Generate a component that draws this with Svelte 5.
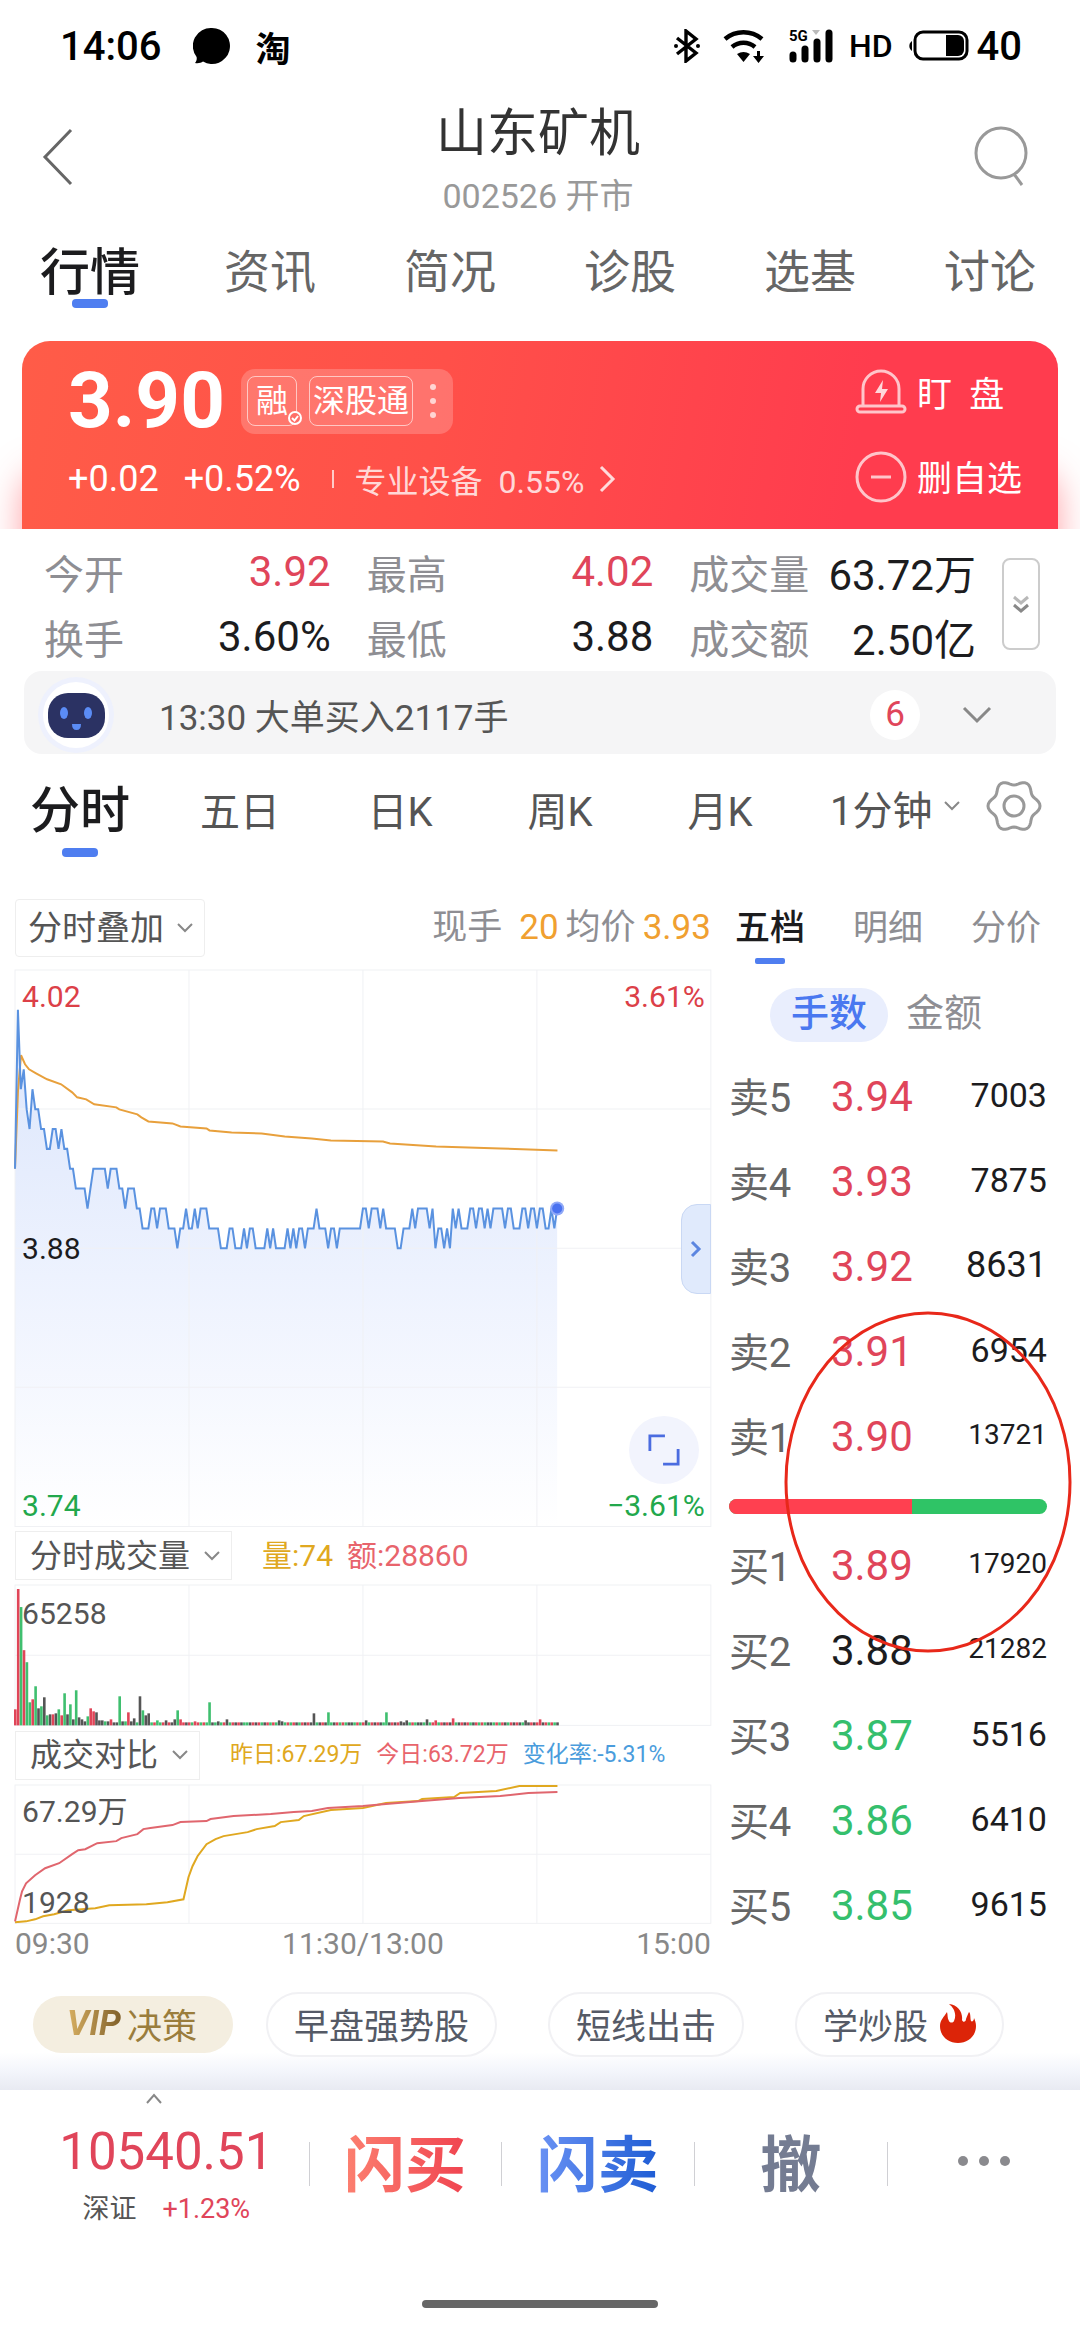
<script lang="ts">
  interface Level {
    name: string;
    price: string;
    volume: string;
    tone: string;
    size: string;
  }

  const tabs = ['行情', '资讯', '简况', '诊股', '选基', '讨论'];
  const periods = ['分时', '五日', '日K', '周K', '月K'];
  const bookTabs = ['五档', '明细', '分价'];

  let activeTab = 0;
  let activePeriod = 0;
  let activeBook = 0;
  let unit = '手数';

  const quote = [
    { label: '今开', value: '3.92', tone: 'up' },
    { label: '最高', value: '4.02', tone: 'up' },
    { label: '成交量', value: '63.72万', tone: '' },
    { label: '换手', value: '3.60%', tone: '' },
    { label: '最低', value: '3.88', tone: '' },
    { label: '成交额', value: '2.50亿', tone: '' }
  ];

  const asks: Level[] = [
    { name: '卖5', price: '3.94', volume: '7003', tone: 'up', size: 'mid' },
    { name: '卖4', price: '3.93', volume: '7875', tone: 'up', size: 'mid' },
    { name: '卖3', price: '3.92', volume: '8631', tone: 'up', size: 'big' },
    { name: '卖2', price: '3.91', volume: '6954', tone: 'up', size: 'mid' },
    { name: '卖1', price: '3.90', volume: '13721', tone: 'up', size: 'small' }
  ];

  const bids: Level[] = [
    { name: '买1', price: '3.89', volume: '17920', tone: 'up', size: 'small' },
    { name: '买2', price: '3.88', volume: '21282', tone: '', size: 'small' },
    { name: '买3', price: '3.87', volume: '5516', tone: 'down', size: 'mid' },
    { name: '买4', price: '3.86', volume: '6410', tone: 'down', size: 'mid' },
    { name: '买5', price: '3.85', volume: '9615', tone: 'down', size: 'mid' }
  ];

  const buyShare = 57.5;

  // Chart geometry: 240 trading minutes across, 28 price ticks down
  const W = 694;
  const H = 555;
  const step = W / 240;
  const tick = H / 28;
  const cols = [W / 4, W / 2, (W * 3) / 4];

  // One hex digit per minute: ticks above the 3.88 close
  const minutes =
    '4c897687766' + '5566565544' + '3333234444' + '4344433233' + '3221112212' +
    '2211101121' + '1212221111' + '0001100010' + '1100001010' + '0001010110' +
    '1112111011' + '0111111112' + '2122212111' + '1001112122' + '2212011010' +
    '2121112212' + '2121222212' + '2111221221' + '2211212';

  const points = [...minutes].map((c, i) => {
    const y = H / 2 - parseInt(c, 16) * tick;
    return `${(i * step).toFixed(1)},${y.toFixed(1)}`;
  });
  const priceLine = points.join(' ');
  const lastX = (minutes.length - 1) * step;
  const lastY = H / 2 - 2 * tick;
  const priceArea = `0,${H} ${priceLine} ${lastX.toFixed(1)},${H}`;

  const avgLine =
    '0,198 3,120 6,85 10,94 14,99 21,103 32,109 46,114 57,122 62,127 71,129 79,134 101,137 104,139 122,144 126,147 133,151 157,153 165,156 191,158 194,160 216,162 246,163 269,166 296,168 315,170 367,171 374,173 420,176 484,178 541,180';
  const todayLine =
    '0,136 5,114 7,106 11,98 20,90 30,83 44,78 57,69 63,65 70,64 82,58 101,56 106,53 122,49 128,44 135,43 157,40 165,37 191,36 195,34 218,31 255,29 278,27 296,26 312,23 347,21 370,19 406,16 443,13 484,11 512,8 541,7';
  const yesterdayLine =
    '0,137 11,136 20,134 28,131 39,129 53,125 80,123 94,120 131,119 152,117 168,114 173,92 177,81 182,71 191,59 200,54 208,51 232,47 241,44 259,41 265,37 283,35 288,31 315,25 347,23 370,18 402,16 406,14 438,12 444,8 480,6 503,1 541,1';

  // minute, height, colour (r up, g down, k flat)
  const spikes =
    '0 16 r,1 136 r,2 118 g,3 75 r,4 63 g,5 23 g,6 26 r,7 39 g,8 17 k,9 19 g,10 28 k,11 10 g,12 11 k,13 11 r,14 12 k,15 16 g,16 10 r,17 32 g,18 11 k,19 21 g,20 6 k,21 35 g,22 8 k,23 6 k,24 4 k,25 9 g,26 17 r,27 14 r,28 13 k,29 5 k,30 5 k,31 4 g,32 4 k,33 6 r,34 3 k,36 29 g,37 4 k,38 4 g,39 13 r,40 4 k,41 7 k,43 29 k,44 15 g,45 10 k,46 12 k,49 5 g,52 5 k,55 6 k,56 15 g,57 6 r,62 4 r,67 23 g,70 4 k,73 6 k,91 5 k,92 4 k,103 12 k,108 13 g,121 5 k,128 13 g,133 4 k,135 5 k,142 6 k,145 5 r,151 7 r,176 5 k,181 6 r';
  const fills = { r: '#e04558', g: '#3fbf6f', k: '#555' };
  const volumes = [...minutes].map((_, i) => ({ h: 3, c: 'rkgrgk'[(i * 7 + (i >> 2)) % 6] }));
  spikes.split(',').forEach((s) => {
    const [m, h, c] = s.split(' ');
    volumes[+m] = { h: +h, c };
  });

  // Six-lobed settings icon
  const gear = Array.from({ length: 72 }, (_, i) => {
    const a = (i * Math.PI) / 36;
    const r = 23.5 + 2.5 * Math.cos(6 * a);
    return `${(28 + r * Math.cos(a)).toFixed(1)},${(28 + r * Math.sin(a)).toFixed(1)}`;
  }).join(' ');
</script>

{#snippet caret()}
  <svg class="caret" viewBox="0 0 18 12" aria-hidden="true"><path d="M2 2l7 7 7-7" /></svg>
{/snippet}

{#snippet grid(h: number)}
  <g class="grid">
    <rect x="0" y="0" width={W} height={h} />
    {#each cols as x}
      <line x1={x} x2={x} y1="0" y2={h} />
    {/each}
    <line x1="0" x2={W} y1={h / 2} y2={h / 2} />
  </g>
{/snippet}

{#snippet book(rows: Level[], caption: string)}
  <table class="book" aria-label={caption}>
    <tbody>
      {#each rows as row}
        <tr>
          <th scope="row">{row.name}</th>
          <td class="price {row.tone}">{row.price}</td>
          <td class="volume {row.size}">{row.volume}</td>
        </tr>
      {/each}
    </tbody>
  </table>
{/snippet}

<div class="page">
  <!-- Status bar -->
  <div class="status">
    <span class="clock">14:06</span>
    <svg class="bubble" viewBox="0 0 38 38" aria-hidden="true">
      <path d="M19 1a18 18 0 1 1-9 33.600c-2 1.400-5 2-8 1.400 1.600-2 2-4 1.600-6A18 18 0 0 1 19 1z" />
    </svg>
    <span class="tao">淘</span>
    <div class="signals">
      <svg class="bt" viewBox="0 0 28 34" aria-hidden="true">
        <path d="M4 9l19 15-10 8V2l10 8L4 25" fill="none" stroke="#000" stroke-width="3.400" />
        <circle cx="3" cy="17" r="2" /><circle cx="25" cy="17" r="2" />
      </svg>
      <svg class="wifi" viewBox="0 0 42 34" aria-hidden="true">
        <path d="M2 10a29 29 0 0 1 37 0M9 18a18 18 0 0 1 23 0" fill="none" stroke="#000" stroke-width="4.500" />
        <path d="M14 25q6.500-4 13 0l-6.500 8zM34 22h3v5h4l-5.500 7-5.500-7h4z" />
      </svg>
      <svg class="cell" viewBox="0 0 44 36" aria-hidden="true">
        <text x="0" y="13" font-size="15" font-weight="700">5G</text>
        <path d="M23 2h8l-4 5z" fill="#bbb" />
        <path d="M4 27v4M16 21v10M28 14v17M40 5v26" stroke="#000" stroke-width="7" stroke-linecap="round" />
      </svg>
      <span class="hd">HD</span>
      <svg class="battery" viewBox="0 0 60 32" aria-hidden="true">
        <path d="M3 11a6 6 0 0 0 0 10z" />
        <rect x="6" y="2" width="52" height="27" rx="8" fill="none" stroke="#000" stroke-width="3" />
        <path d="M37 5h12a6 6 0 0 1 6 6v9a6 6 0 0 1-6 6H37z" />
      </svg>
      <span class="level">40</span>
    </div>
  </div>

  <!-- Title -->
  <header class="header">
    <button class="icon-btn" aria-label="返回">
      <svg class="back" viewBox="0 0 32 58"><path d="M29 2L3 29l26 27" /></svg>
    </button>
    <div class="title">
      <h1>山东矿机</h1>
      <p>002526 开市</p>
    </div>
    <button class="icon-btn" aria-label="搜索">
      <svg class="search" viewBox="0 0 54 62"><circle cx="27" cy="27" r="25" /><path d="M40 48l8 11" /></svg>
    </button>
  </header>

  <nav class="tabs">
    {#each tabs as tab, i}
      <button class:active={activeTab === i} on:click={() => (activeTab = i)}>{tab}</button>
    {/each}
  </nav>

  <!-- Price card -->
  <section class="hero">
    <div class="card">
      <div class="card-main">
        <div class="price-row">
          <strong>3.90</strong>
          <div class="marks">
            <span class="mark short">融
              <svg viewBox="0 0 14 14" aria-hidden="true"><circle cx="7" cy="7" r="6" /><path d="M4 7l2.500 2.500L10 5" /></svg>
            </span>
            <span class="mark">深股通</span>
            <svg class="dots" viewBox="0 0 8 36" aria-hidden="true">
              <circle cx="4" cy="4" r="3" /><circle cx="4" cy="18" r="3" /><circle cx="4" cy="32" r="3" />
            </svg>
          </div>
        </div>
        <div class="change">
          <span>+0.02</span>
          <span>+0.52%</span>
          <i></i>
          <a href="#sector">专业设备&nbsp; 0.55%
            <svg viewBox="0 0 18 28" aria-hidden="true"><path d="M3 2l12 12L3 26" /></svg>
          </a>
        </div>
      </div>
      <div class="card-actions">
        <button>
          <svg viewBox="0 0 52 52" aria-hidden="true">
            <path d="M8 38V22a18 18 0 0 1 36 0v16M5 39h42a3 3 0 0 1 0 6H5a3 3 0 0 1 0-6z" />
            <path class="solid" d="M28 13l-8 13h6l-1 9 8-13h-6z" />
          </svg>
          <span>盯&nbsp; 盘</span>
        </button>
        <button>
          <svg viewBox="0 0 52 52" aria-hidden="true"><circle cx="26" cy="26" r="24" /><path d="M16 26h20" /></svg>
          <span>删自选</span>
        </button>
      </div>
    </div>
  </section>

  <section class="quote">
    <dl>
      {#each quote as item}
        <div>
          <dt>{item.label}</dt>
          <dd class={item.tone}>{item.value}</dd>
        </div>
      {/each}
    </dl>
    <button class="expand" aria-label="展开">
      <svg viewBox="0 0 20 20"><path d="M3 3l7 6 7-6" opacity="0.600" /><path d="M3 11l7 6 7-6" /></svg>
    </button>
  </section>

  <button class="notice">
    <svg class="robot" viewBox="0 0 78 78" aria-hidden="true">
      <circle cx="39" cy="39" r="38" fill="#eef1fd" />
      <circle cx="39" cy="39" r="33" fill="#fff" />
      <rect x="11" y="17" width="57" height="45" rx="20" fill="#2b3263" />
      <ellipse cx="27" cy="37" rx="4" ry="6" fill="#5b8cf5" />
      <ellipse cx="51" cy="37" rx="4" ry="6" fill="#5b8cf5" />
      <path d="M35 48h9q0 6-4.500 6t-4.500-6z" fill="#5b8cf5" />
    </svg>
    <span class="notice-text">13:30 大单买入2117手</span>
    <span class="badge">6</span>
    <svg class="chevron" viewBox="0 0 30 18" aria-hidden="true"><path d="M2 2l13 13L28 2" /></svg>
  </button>

  <nav class="periods">
    {#each periods as period, i}
      <button class:active={activePeriod === i} on:click={() => (activePeriod = i)}>{period}</button>
    {/each}
    <div class="period-more">
      <label>
        <select aria-label="分钟周期"><option>1分钟</option></select>
        {@render caret()}
      </label>
      <button class="gear" aria-label="设置">
        <svg viewBox="0 0 56 56"><polygon points={gear} /><circle cx="28" cy="28" r="10" /></svg>
      </button>
    </div>
  </nav>

  <main class="board">
    <section class="charts">
      <div class="chart-head">
        <label class="picker large">
          <select aria-label="叠加"><option>分时叠加</option></select>
          {@render caret()}
        </label>
        <p class="live">
          <span>现手</span><b>20</b><span>均价</span><b>3.93</b>
        </p>
      </div>

      <div class="plot">
        <svg viewBox="0 0 {W} {H}" role="img" aria-label="分时走势">
          <defs>
            <linearGradient id="fade" gradientUnits="userSpaceOnUse" x1="0" y1="100" x2="0" y2={H}>
              <stop offset="0" stop-color="#dfe8fc" />
              <stop offset="0.450" stop-color="#edf2fe" />
              <stop offset="1" stop-color="#ffffff" />
            </linearGradient>
          </defs>
          <polygon points={priceArea} fill="url(#fade)" />
          {@render grid(H)}
          <g class="grid">
            <line x1="0" x2={W} y1={H / 4} y2={H / 4} />
            <line x1="0" x2={W} y1={(H * 3) / 4} y2={(H * 3) / 4} />
          </g>
          <polyline class="avg" points={avgLine} />
          <polyline class="now" points={priceLine} />
          <circle cx={lastX} cy={lastY} r="7" fill="#8fa8f7" />
          <circle cx={lastX} cy={lastY} r="5" fill="#4a72f0" />
          <text class="red" x="7" y="37">4.02</text>
          <text class="red" x="688" y="37" text-anchor="end">3.61%</text>
          <text class="ink" x="7" y="288">3.88</text>
          <text class="green" x="7" y="545">3.74</text>
          <text class="green" x="688" y="545" text-anchor="end">−3.61%</text>
        </svg>
        <button class="handle" aria-label="收起盘口">
          <svg viewBox="0 0 12 20"><path d="M2 3l7 7-7 7" /></svg>
        </button>
        <button class="full" aria-label="全屏">
          <svg viewBox="0 0 34 34"><path d="M2 18V2h16M32 16v16H16" /></svg>
        </button>
      </div>

      <div class="chart-head sub">
        <label class="picker">
          <select aria-label="副图一"><option>分时成交量</option></select>
          {@render caret()}
        </label>
        <p class="legend"><span class="gold">量:74</span><span class="rose">额:28860</span></p>
      </div>
      <div class="plot">
        <svg viewBox="0 0 {W} 140" role="img" aria-label="分时成交量">
          {@render grid(140)}
          {#each volumes as v, i}
            <rect x={i * step - 1} y={140 - v.h} width="2.600" height={v.h} fill={fills[v.c]} />
          {/each}
          <text class="soft" x="7" y="39">65258</text>
        </svg>
      </div>

      <div class="chart-head sub">
        <label class="picker">
          <select aria-label="副图二"><option>成交对比</option></select>
          {@render caret()}
        </label>
        <p class="legend compare">
          <span class="gold">昨日:67.29万</span><span class="rose">今日:63.72万</span><span class="sky">变化率:-5.31%</span>
        </p>
      </div>
      <div class="plot">
        <svg viewBox="0 0 {W} 138" role="img" aria-label="成交对比">
          {@render grid(138)}
          <polyline class="yesterday" points={yesterdayLine} />
          <polyline class="today" points={todayLine} />
          <text class="soft" x="7" y="37">67.29万</text>
          <text class="soft" x="7" y="128">1928</text>
        </svg>
      </div>
      <div class="axis"><span>09:30</span><span>11:30/13:00</span><span>15:00</span></div>
    </section>

    <section class="depth">
      <nav class="book-tabs">
        {#each bookTabs as tab, i}
          <button class:active={activeBook === i} on:click={() => (activeBook = i)}>{tab}</button>
        {/each}
      </nav>
      <div class="units">
        {#each ['手数', '金额'] as name}
          <button class:active={unit === name} on:click={() => (unit = name)}>{name}</button>
        {/each}
      </div>
      {@render book(asks, '卖盘')}
      <div class="ratio"><span style="width: {buyShare}%"></span></div>
      {@render book(bids, '买盘')}
      <svg class="circle-mark" viewBox="0 0 288 342" aria-hidden="true">
        <ellipse cx="144" cy="171" rx="142" ry="169" />
      </svg>
    </section>
  </main>

  <div class="shortcuts">
    <button class="vip"><em>VIP</em>决策</button>
    <button>早盘强势股</button>
    <button>短线出击</button>
    <button>学炒股
      <svg viewBox="0 0 36 40" aria-hidden="true">
        <path d="M9 0c9 1 14 8 13 16 1 3 4 2 4-1 1-3 2-5 3-7 2 2 1 6 2 9 1 1 3 0 3-3 1 2 2 5 2 8 0 10-8 17-18 17S0 32 0 22c0-6 4-9 7-14 1 3 0 6 2 9 1 2 4 2 5 0C17 10 14 4 9 0z" />
      </svg>
    </button>
  </div>

  <footer class="trade">
    <button class="index">
      <svg viewBox="0 0 18 12" aria-hidden="true"><path d="M2 10l7-8 7 8" /></svg>
      <span class="index-value">10540.51</span>
      <span class="index-row"><span>深证</span><span class="up">+1.23%</span></span>
    </button>
    <button class="buy"><span>闪买</span></button>
    <button class="sell"><span>闪卖</span></button>
    <button class="cancel"><span>撤</span></button>
    <button class="more" aria-label="更多">
      <svg viewBox="0 0 52 12"><circle cx="5" cy="6" r="5" /><circle cx="26" cy="6" r="5" /><circle cx="47" cy="6" r="5" /></svg>
    </button>
  </footer>
  <div class="home"></div>
</div>

<style>
  :global(body) {
    margin: 0;
    background: #fff;
  }

  .page {
    font-family: Roboto, 'Noto Sans CJK SC', sans-serif;
    color: #1c1c1e;
    background: #fff;
  }

  button,
  select {
    font: inherit;
    color: inherit;
    background: none;
    border: 0;
    padding: 0;
    margin: 0;
    cursor: pointer;
  }

  select {
    appearance: none;
  }

  p,
  h1,
  dl,
  dd {
    margin: 0;
    font-weight: 400;
  }

  svg {
    display: block;
    flex: none;
    fill: none;
  }

  .up {
    color: #e0455a;
  }

  .down {
    color: #35bf6d;
  }

  /* Status bar */
  .status {
    display: flex;
    align-items: center;
    height: 92px;
    padding: 0 58px 0 60px;
    font-size: 40px;
    font-weight: 500;
    color: #000;
  }

  .status svg {
    fill: #000;
  }

  .bubble {
    width: 38px;
    margin: 0 24px 0 32px;
  }

  .tao {
    font-size: 35px;
    font-weight: 700;
  }

  .signals {
    display: flex;
    align-items: center;
    margin-left: auto;
  }

  .bt {
    width: 28px;
    margin-right: 22px;
  }

  .wifi {
    width: 42px;
    margin-right: 24px;
  }

  .cell {
    width: 44px;
    margin-right: 16px;
  }

  .hd {
    font-size: 32px;
    margin-right: 16px;
  }

  .battery {
    width: 60px;
    margin-right: 8px;
  }

  /* Title */
  .header {
    display: flex;
    align-items: center;
    justify-content: space-between;
    height: 140px;
    padding: 0 46px 0 42px;
  }

  .icon-btn {
    width: 60px;
    padding-bottom: 10px;
  }

  .back {
    width: 32px;
    stroke: #666;
    stroke-width: 3;
  }

  .search {
    width: 54px;
    stroke: #999;
    stroke-width: 3;
  }

  .title {
    text-align: center;
  }

  h1 {
    font-size: 51px;
    line-height: 68px;
    color: #333;
  }

  .title p {
    font-size: 34px;
    line-height: 56px;
    color: #999;
  }

  /* Tabs */
  .tabs {
    display: grid;
    grid-template-columns: repeat(6, 1fr);
    height: 72px;
    margin-bottom: 37px;
    font-size: 46px;
    color: #666;
  }

  .tabs button {
    padding-bottom: 2px;
  }

  .active {
    position: relative;
  }

  .tabs .active,
  .periods .active {
    font-size: 50px;
    font-weight: 500;
    color: #1c1c1e;
  }

  .tabs .active::after,
  .periods .active::after,
  .book-tabs .active::after {
    content: '';
    position: absolute;
    left: 50%;
    bottom: 0;
    width: 36px;
    height: 9px;
    margin-left: -18px;
    border-radius: 4px;
    background: #4f7ef0;
  }

  .tabs .active::after {
    bottom: -2px;
  }

  /* Price card */
  .hero {
    padding: 0 22px;
    overflow: hidden;
  }

  .card {
    display: flex;
    justify-content: space-between;
    height: 188px;
    box-sizing: border-box;
    padding: 12px 36px 0 46px;
    border-radius: 28px 28px 0 0;
    background: linear-gradient(100deg, #ff5c48 0%, #ff5049 40%, #ff3c4e 80%);
    box-shadow: 0 130px 34px rgba(255, 70, 80, 0.5);
    color: #fff;
  }

  .price-row {
    display: flex;
    align-items: center;
    gap: 16px;
    height: 96px;
  }

  .price-row strong {
    font-size: 78px;
    font-weight: 700;
    line-height: 92px;
  }

  .marks {
    display: flex;
    align-items: center;
    gap: 12px;
    height: 65px;
    padding: 0 16px 0 6px;
    border-radius: 14px;
    background: rgba(255, 255, 255, 0.2);
  }

  .mark {
    position: relative;
    height: 48px;
    padding: 0 3px;
    border: 1px solid rgba(255, 255, 255, 0.6);
    border-radius: 8px;
    font-size: 32px;
    line-height: 48px;
  }

  .short {
    padding: 0 8px;
  }

  .mark svg {
    position: absolute;
    right: -6px;
    bottom: 0;
    width: 14px;
    stroke: #fff;
    stroke-width: 2;
    fill: #ff6f68;
  }

  .dots {
    width: 8px;
    margin-left: 4px;
    fill: rgba(255, 255, 255, 0.7);
  }

  .change {
    display: flex;
    align-items: center;
    gap: 25px;
    height: 60px;
    font-size: 36px;
  }

  .change i {
    width: 2px;
    height: 18px;
    margin: 0 -4px 0 6px;
    background: rgba(255, 255, 255, 0.7);
  }

  .change a {
    display: flex;
    align-items: center;
    gap: 14px;
    font-size: 32px;
    color: rgba(255, 255, 255, 0.8);
    text-decoration: none;
  }

  .change svg {
    width: 18px;
    stroke: rgba(255, 255, 255, 0.8);
    stroke-width: 3;
  }

  .card-actions button {
    display: flex;
    align-items: center;
    gap: 10px;
    height: 52px;
    margin: 14px 0 32px;
    font-size: 35px;
  }

  .card-actions span {
    padding-bottom: 4px;
  }

  .card-actions svg {
    width: 52px;
    stroke: rgba(255, 255, 255, 0.7);
    stroke-width: 3;
  }

  .card-actions .solid {
    fill: rgba(255, 255, 255, 0.8);
    stroke: none;
  }

  /* Quote */
  .quote {
    display: flex;
    align-items: center;
    gap: 26px;
    padding: 10px 40px 0 44px;
  }

  dl {
    flex: 1;
    display: grid;
    grid-template-columns: repeat(3, 1fr);
    column-gap: 36px;
  }

  dl div {
    display: flex;
    justify-content: space-between;
    align-items: center;
    height: 65px;
    white-space: nowrap;
  }

  dt {
    font-size: 40px;
    color: #8e8e93;
  }

  dd {
    font-size: 42px;
  }

  .expand {
    display: flex;
    align-items: center;
    justify-content: center;
    width: 38px;
    height: 92px;
    box-sizing: border-box;
    border: 2px solid #ccc;
    border-radius: 8px;
  }

  .expand svg {
    width: 20px;
    stroke: #888;
    stroke-width: 3;
  }

  .notice {
    display: flex;
    align-items: center;
    width: calc(100% - 48px);
    height: 83px;
    margin: 2px 24px 0;
    padding: 4px 64px 0 13px;
    border-radius: 18px;
    background: #f5f5f6;
  }

  .robot {
    width: 78px;
  }

  .notice-text {
    flex: 1;
    margin-left: 44px;
    font-size: 35px;
    text-align: left;
    color: #555;
  }

  .badge {
    width: 50px;
    height: 50px;
    margin-right: 42px;
    border-radius: 50%;
    background: #fff;
    font-size: 35px;
    line-height: 50px;
    text-align: center;
    color: #e0455a;
  }

  .chevron {
    width: 30px;
    stroke: #888;
    stroke-width: 3;
  }

  /* Periods */
  .periods {
    display: grid;
    grid-template-columns: repeat(5, 4fr) 7fr;
    height: 103px;
    margin-bottom: 42px;
    font-size: 40px;
    color: #555;
  }

  .periods > button {
    padding-top: 6px;
  }

  .periods > .active {
    padding-top: 0;
  }

  .period-more {
    display: flex;
    align-items: center;
    justify-content: space-between;
    padding: 0 38px 0 30px;
  }

  .period-more label {
    display: flex;
    align-items: center;
    gap: 10px;
  }

  .period-more select {
    padding-top: 12px;
  }

  .caret {
    width: 18px;
    stroke: #888;
    stroke-width: 2;
  }

  .gear svg {
    width: 56px;
    stroke: #999;
    stroke-width: 3;
  }

  /* Board */
  .board {
    display: grid;
    grid-template-columns: 35fr 16fr;
    gap: 18px;
    padding: 0 33px 0 15px;
  }

  .chart-head {
    display: flex;
    align-items: center;
    justify-content: space-between;
    margin-bottom: 13px;
  }

  .chart-head.sub {
    justify-content: flex-start;
    gap: 30px;
    margin: 5px 0;
  }

  .picker {
    display: flex;
    align-items: center;
    gap: 12px;
    height: 49px;
    box-sizing: border-box;
    padding: 0 10px 0 14px;
    border: 1px solid #eee;
    font-size: 32px;
    color: #555;
  }

  .large {
    height: 58px;
    padding: 0 10px 0 12px;
    border-radius: 4px;
    font-size: 34px;
  }

  .live {
    display: flex;
    align-items: baseline;
    gap: 7px;
    font-size: 35px;
    line-height: 50px;
    color: #8e8e93;
  }

  .live b {
    font-weight: 400;
    color: #f0a030;
  }

  .live b:nth-child(2) {
    margin-left: 10px;
  }

  .plot {
    position: relative;
  }

  .plot > svg {
    width: 100%;
    height: auto;
    overflow: visible;
  }

  .grid rect,
  .grid line {
    stroke: #f0f1f4;
    stroke-width: 1;
  }

  .plot text {
    font-size: 30px;
  }

  .avg {
    stroke: #e8a03c;
    stroke-width: 2;
  }

  .now {
    stroke: #5a92e0;
    stroke-width: 2;
  }

  .today {
    stroke: #e0666e;
    stroke-width: 2;
  }

  .yesterday {
    stroke: #e0a820;
    stroke-width: 2;
  }

  .red {
    fill: #dc4048;
  }

  .green {
    fill: #22a84c;
  }

  .ink {
    fill: #1c1c1e;
  }

  .soft {
    fill: #555;
  }

  .handle {
    position: absolute;
    top: 42%;
    right: 0;
    display: flex;
    align-items: center;
    justify-content: center;
    width: 30px;
    height: 90px;
    border: 1px solid #c9d8f4;
    border-radius: 16px 0 0 16px;
    background: #e0eafc;
  }

  .handle svg {
    width: 12px;
    stroke: #5c86e0;
    stroke-width: 3;
  }

  .full {
    position: absolute;
    right: 12px;
    bottom: 42px;
    display: flex;
    align-items: center;
    justify-content: center;
    width: 70px;
    height: 68px;
    border-radius: 50%;
    background: #f2f4fd;
  }

  .full svg {
    width: 32px;
    stroke: #4b6ce0;
    stroke-width: 3;
  }

  .legend {
    display: flex;
    gap: 14px;
    font-size: 30px;
    line-height: 46px;
    white-space: nowrap;
  }

  .compare {
    gap: 14px;
    font-size: 23px;
  }

  .gold {
    color: #e0a820;
  }

  .rose {
    color: #e8646c;
  }

  .sky {
    color: #4a9cdc;
  }

  .axis {
    display: flex;
    justify-content: space-between;
    font-size: 30px;
    line-height: 42px;
    color: #888;
  }

  /* Order book */
  .depth {
    position: relative;
  }

  .book-tabs {
    display: flex;
    justify-content: space-between;
    height: 65px;
    padding: 0 6px;
    font-size: 35px;
    color: #8e8e93;
  }

  .book-tabs button {
    padding-bottom: 14px;
  }

  .book-tabs .active {
    font-weight: 500;
    color: #1c1c1e;
  }

  .book-tabs .active::after {
    width: 30px;
    height: 6px;
    margin-left: -15px;
    border-radius: 2px;
  }

  .units {
    display: flex;
    gap: 18px;
    margin: 24px 0 12px 41px;
    font-size: 38px;
    color: #8e8e93;
  }

  .units button {
    padding-bottom: 4px;
    line-height: 50px;
  }

  .units .active {
    padding: 0 21px 4px;
    border-radius: 27px;
    background: #e9eefd;
    font-weight: 500;
    color: #4a78f0;
  }

  .book {
    width: 100%;
    border-collapse: collapse;
    table-layout: fixed;
  }

  .book tr {
    height: 85px;
  }

  .book th,
  .book td {
    padding: 0 0 4px;
    font-weight: 400;
    text-align: left;
  }

  .book th {
    width: 102px;
    font-size: 40px;
    color: #666;
  }

  .book .price {
    width: 100px;
    padding-bottom: 0;
    font-size: 42px;
  }

  .book .volume {
    text-align: right;
    font-size: 34px;
  }

  .book .big {
    font-size: 36px;
  }

  .book .small {
    font-size: 28px;
  }

  .ratio {
    height: 15px;
    margin: 20px 0 9px;
    border-radius: 8px;
    overflow: hidden;
    background: #2fc466;
  }

  .ratio span {
    display: block;
    height: 100%;
    background: #ff4050;
  }

  .circle-mark {
    position: absolute;
    top: 412px;
    right: -25px;
    width: 288px;
    stroke: #e8281a;
    stroke-width: 3;
    pointer-events: none;
  }

  /* Shortcuts */
  .shortcuts {
    display: flex;
    align-items: center;
    justify-content: space-between;
    padding: 27px 76px 33px 33px;
    background: linear-gradient(#fff 70%, #f3f5fb 85%, #e8eaf2);
    font-size: 35px;
    color: #555a66;
  }

  .shortcuts button {
    display: flex;
    align-items: center;
    gap: 12px;
    height: 65px;
    padding: 0 26px 2px;
    box-sizing: border-box;
    border: 2px solid #f1f1f4;
    border-radius: 33px;
    background: #fff;
  }

  .shortcuts .vip {
    gap: 6px;
    height: 57px;
    margin-right: -18px;
    padding: 0 36px 2px 34px;
    border: 0;
    background: #f4eee0;
    color: #9a7d3c;
  }

  .vip em {
    font-weight: 700;
    background: linear-gradient(90deg, #d8b062, #80602a);
    background-clip: text;
    color: transparent;
  }

  .shortcuts svg {
    width: 36px;
    fill: #dc2408;
  }

  /* Trade bar */
  .trade {
    display: grid;
    grid-template-columns: 8fr 5fr 5fr 5fr 5fr;
    align-items: start;
    height: 210px;
  }

  .trade > button {
    position: relative;
    height: 148px;
    padding-bottom: 7px;
    font-size: 61px;
    font-weight: 700;
  }

  .trade > button + button::before {
    content: '';
    position: absolute;
    left: 0;
    top: 52px;
    width: 1px;
    height: 44px;
    background: #d0d0d4;
  }

  .trade .index {
    display: flex;
    flex-direction: column;
    align-items: center;
    padding: 3px 0 0 24px;
    font-weight: 400;
  }

  .index svg {
    width: 18px;
    margin-right: 24px;
    stroke: #888;
    stroke-width: 2;
  }

  .index-value {
    margin-top: 12px;
    font-size: 51px;
    line-height: 70px;
    color: #e0455a;
  }

  .index-row {
    display: flex;
    gap: 26px;
    font-size: 27px;
    line-height: 44px;
    color: #555;
  }

  .buy span,
  .sell span {
    background: linear-gradient(90deg, #fc8070, #f04450);
    background-clip: text;
    color: transparent;
  }

  .sell span {
    background-image: linear-gradient(90deg, #6a92f4, #1e5cd4);
  }

  .cancel {
    color: #747c92;
  }

  .more svg {
    width: 52px;
    margin: 0 auto;
    fill: #8a8a8e;
  }

  .home {
    width: 236px;
    height: 8px;
    margin: 0 auto;
    border-radius: 4px;
    background: #666;
  }
</style>
